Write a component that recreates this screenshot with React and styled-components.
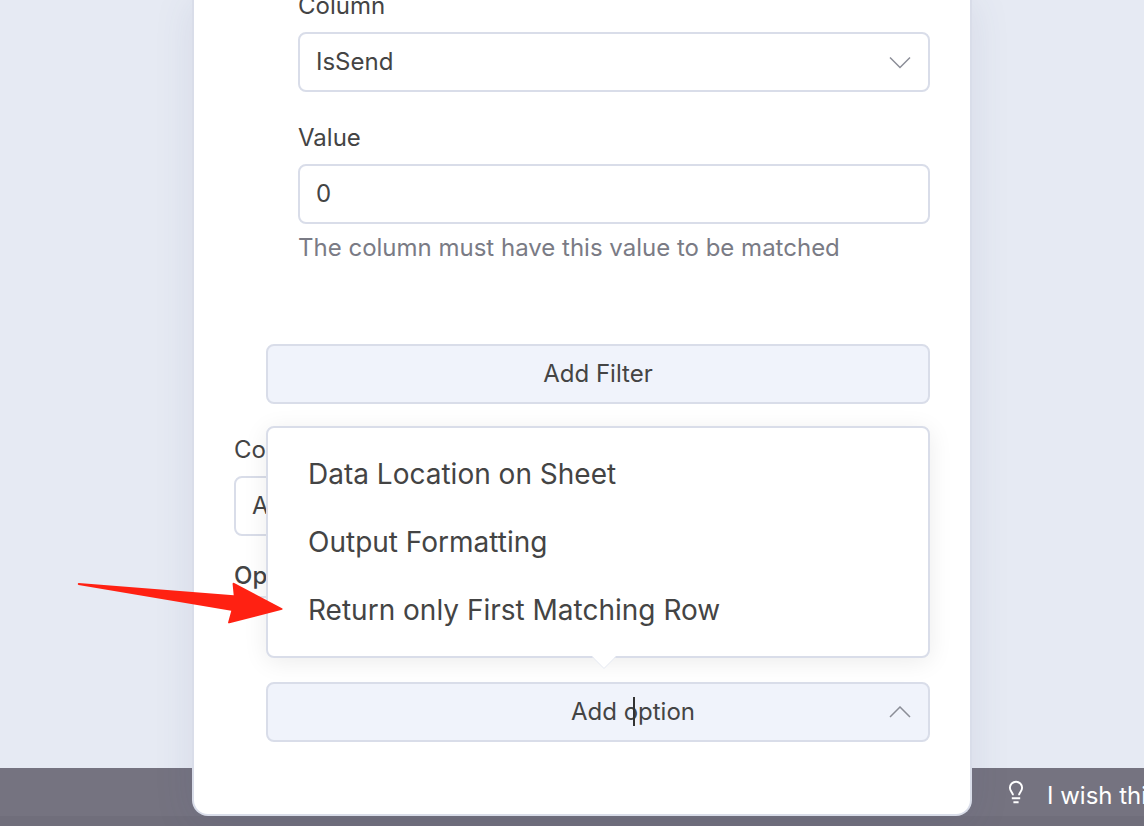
import React from "react";
import styled, { createGlobalStyle, css } from "styled-components";

const GlobalStyle = createGlobalStyle`
  * {
    box-sizing: border-box;
  }
  body {
    margin: 0;
    background: #e6eaf3;
    color: #444;
    font-family: Inter, "Liberation Sans", sans-serif;
    font-size: 24px;
    line-height: 24px;
  }
`;

const Page = styled.div`
  display: grid;
  grid-template-columns: 192px minmax(0, 1fr) 172px;
  grid-template-rows: 1fr 58px;
  min-height: 100vh;
  overflow: hidden;
`;

const Footer = styled.footer`
  grid-column: 1 / -1;
  grid-row: 2;
  display: grid;
  grid-template-columns: subgrid;
  background: #757380;
  border-bottom: 10px solid #706e7b;
`;

const WishLink = styled.a`
  grid-column: 3;
  display: flex;
  align-items: center;
  gap: 23px;
  padding: 8px 0 0 36px;
  overflow: hidden;
  color: #fff;
  text-decoration: none;
  white-space: nowrap;

  svg {
    flex: none;
    margin-bottom: 8px;
  }
`;

const Panel = styled.main`
  grid-column: 2;
  grid-row: 1 / 3;
  z-index: 1;
  margin: -6px 0 10px;
  padding: 0 40px 72px;
  background: #fff;
  border: 2px solid #d9dde9;
  border-top: none;
  border-radius: 0 0 16px 16px;
  box-shadow: 0 8px 40px rgba(70, 80, 130, 0.1);
`;

const FilterGroup = styled.section`
  display: flex;
  flex-direction: column;
  padding-left: 64px;
  gap: 34px;
`;

const Indented = styled.div`
  position: relative;
  padding-left: 32px;
  margin-top: ${({ $space }) => $space}px;
`;

const Field = styled.div`
  display: flex;
  flex-direction: column;
  gap: 14px;
  margin-top: ${({ $space }) => $space || 0}px;
`;

const Label = styled.label`
  align-self: flex-start;
`;

const Hint = styled.p`
  margin: -2px 0 0;
  color: #7a7b85;
`;

const control = css`
  display: block;
  width: 100%;
  height: 60px;
  margin: 0;
  padding: 0 16px;
  border: 2px solid #d9dde9;
  border-radius: 8px;
  background: #fff;
  color: #444;
  font: inherit;
  outline: none;
`;

const Input = styled.input`
  ${control}
  padding-bottom: 2px;
`;

const Select = styled.select`
  ${control}
  appearance: none;
`;

const AddButton = styled.button`
  ${control}
  background: #f0f3fb;
`;

const OptionInput = styled(Input)`
  padding-left: 86px;
  background: #f0f3fb;
  text-align: center;

  &::placeholder {
    color: #444;
    opacity: 1;
  }
`;

const ControlBox = styled.div`
  position: relative;
`;

const ChevronIcon = styled.svg`
  position: absolute;
  top: 24px;
  right: 19px;
  pointer-events: none;
`;

const Caret = styled.span`
  position: absolute;
  top: 15px;
  left: calc(50% + 35px);
  width: 2px;
  height: 29px;
  background: #333;
`;

const SectionTitle = styled.h2`
  margin: 28px 0 0;
  padding-bottom: 8px;
  border-bottom: 2px solid #e3e6ef;
  font-size: 24px;
  font-weight: 500;
  line-height: 24px;
`;

const Menu = styled.div`
  position: absolute;
  z-index: 2;
  bottom: calc(100% + 24px);
  left: 0;
  right: 0;
  padding: 12px 0;
  background: #fff;
  border: 2px solid #d9dde9;
  border-radius: 8px;
  box-shadow: 0 4px 24px rgba(0, 0, 0, 0.08);
`;

const MenuItem = styled.button`
  display: block;
  width: 100%;
  height: 68px;
  padding: 0 40px;
  border: none;
  background: none;
  color: #444;
  font: inherit;
  font-size: 28px;
  text-align: left;
`;

const MenuTail = styled.svg`
  position: absolute;
  top: 100%;
  left: calc(50% - 6px);
`;

const Arrow = styled.svg`
  position: absolute;
  bottom: 30px;
  left: -192px;
  pointer-events: none;
`;

const menuOptions = [
  "Data Location on Sheet",
  "Output Formatting",
  "Return only First Matching Row",
];

const Chevron = ({ up }) => (
  <ChevronIcon width="22" height="13" viewBox="0 0 22 13" fill="none">
    <path
      d={up ? "M1 11 11 1 21 11" : "M1 1.5 11 11.5 21 1.5"}
      stroke="#8b8d97"
      strokeWidth="1.5"
    />
  </ChevronIcon>
);

const Bulb = () => (
  <svg width="16" height="24" viewBox="0 0 16 24" fill="none" stroke="#fff">
    <path
      d="M5 15.2C5 12.4 1.9 11.6 1.9 7.8a6.1 6.1 0 0 1 12.2 0c0 3.8-3.1 4.6-3.1 7.4"
      strokeWidth="1.9"
    />
    <path d="M3.8 18.2h8.4M5.4 22.2h5.2" strokeWidth="1.9" />
  </svg>
);

const AddOption = () => (
  <Indented $space={84}>
    <ControlBox>
      <Menu role="menu">
        {menuOptions.map((name) => (
          <MenuItem key={name} role="menuitem" type="button">
            {name}
          </MenuItem>
        ))}
        <MenuTail width="24" height="13" viewBox="0 0 24 13">
          <path d="M0 0h24L12 12z" fill="#fff" />
          <path d="M0 0.5 12 12.5 24 0.5" fill="none" stroke="#e6eaf3" />
        </MenuTail>
        <Arrow width="208" height="46" viewBox="0 0 208 46">
          <path
            d="M2.5 3 157.7 15.3 156.6 4Q156.6 2.2 158.2 3L206 28.2Q207.5 29 206 29.7L153.5 43.3Q151.5 43.6 152.2 42L155.3 30.8 2.5 5Q1 4 2.5 3z"
            fill="#ff2112"
          />
        </Arrow>
      </Menu>
      <OptionInput aria-label="Add option" placeholder="Add option" />
      <Caret />
      <Chevron up />
    </ControlBox>
  </Indented>
);

const App = () => (
  <>
    <GlobalStyle />
    <Page>
      <Panel>
        <FilterGroup>
          <Field>
            <Label htmlFor="column">Column</Label>
            <ControlBox>
              <Select id="column">
                <option>IsSend</option>
              </Select>
              <Chevron />
            </ControlBox>
          </Field>
          <Field>
            <Label htmlFor="value">Value</Label>
            <Input id="value" defaultValue="0" />
            <Hint>The column must have this value to be matched</Hint>
          </Field>
        </FilterGroup>
        <Indented $space={84}>
          <AddButton type="button">Add Filter</AddButton>
        </Indented>
        <Field $space={34}>
          <Label htmlFor="combine">Combine Filters</Label>
          <ControlBox>
            <Select id="combine">
              <option>AND</option>
            </Select>
            <Chevron />
          </ControlBox>
        </Field>
        <SectionTitle>Options</SectionTitle>
        <AddOption />
      </Panel>
      <Footer>
        <WishLink href="#wish">
          <Bulb />
          I wish this node would...
        </WishLink>
      </Footer>
    </Page>
  </>
);

export default App;
